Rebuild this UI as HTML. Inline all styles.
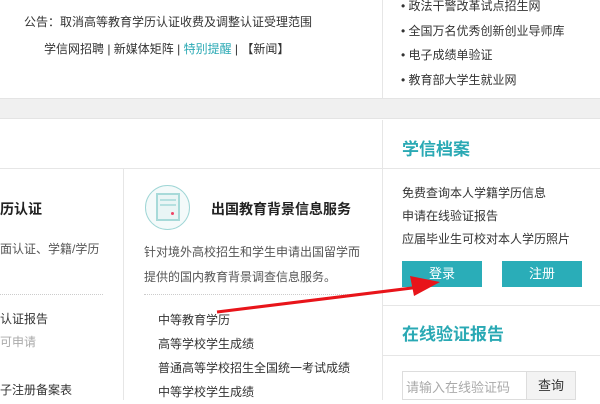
<!DOCTYPE html>
<html><head><meta charset="utf-8"><style>
*{margin:0;padding:0;box-sizing:border-box}
body{width:600px;height:400px;overflow:hidden;background:#fff;font-family:"Liberation Sans","Noto Sans CJK SC",sans-serif;color:#333;position:relative;font-size:12px}
.a{position:absolute;white-space:nowrap}
.teal{color:#2aa9b4}
.gray{background:#f0f0f0;position:absolute;left:0;top:98px;width:600px;height:21px;border-top:1px solid #e4e4e4;border-bottom:1px solid #e4e4e4}
.hl{position:absolute;height:1px;background:#e6e6e6}
.vl{position:absolute;width:1px;background:#e6e6e6}
.dot{position:absolute;border-top:1px dotted #ccc;height:0}
.btn{position:absolute;background:#2aadb8;color:#fff;text-align:center;font-size:13px;line-height:26px;height:26px;width:80px}
</style></head><body>
<div class="a" style="left:24px;top:13px;font-size:12px">公告：取消高等教育学历认证收费及调整认证受理范围</div>
<div class="a" style="left:44px;top:40px;font-size:12px">学信网招聘 | 新媒体矩阵 | <span class="teal">特别提醒</span> | 【新闻】</div>
<div class="vl" style="left:382px;top:0;height:98px"></div>
<div class="a" style="left:401px;top:-6px;line-height:24.5px;font-size:12px">• 政法干警改革试点招生网<br>• 全国万名优秀创新创业导师库<br>• 电子成绩单验证<br>• 教育部大学生就业网</div>
<div class="gray"></div>
<div class="vl" style="left:382px;top:120px;height:280px"></div>
<div class="hl" style="left:0;top:168px;width:382px"></div>
<div class="hl" style="left:382px;top:168px;width:218px"></div>
<div class="vl" style="left:123px;top:168px;height:232px"></div>
<div class="a" style="left:0;top:199px;font-size:14px;font-weight:bold;color:#222">历认证</div>
<div class="a" style="left:0;top:240px;color:#555">面认证、学籍/学历</div>
<div class="dot" style="left:0;top:294px;width:103px"></div>
<div class="a" style="left:0;top:310px">认证报告</div>
<div class="a" style="left:0;top:333px;color:#aaa">可申请</div>
<div class="a" style="left:0;top:381px">子注册备案表</div>
<div style="position:absolute;left:145px;top:185px;width:45px;height:45px;border:1px solid #9fd6d6;border-radius:50%;background:#f4fafa"></div>
<div style="position:absolute;left:156px;top:193px;width:24px;height:28px;border:2px solid #a7dad9;background:#e9f5f5"></div>
<div style="position:absolute;left:160px;top:199px;width:16px;height:2px;background:#b5e0e0"></div>
<div style="position:absolute;left:160px;top:204px;width:16px;height:2px;background:#b5e0e0"></div>
<div style="position:absolute;left:171px;top:212px;width:3px;height:3px;background:#e46;border-radius:50%"></div>
<div class="a" style="left:211px;top:199px;font-size:14px;font-weight:bold;color:#222">出国教育背景信息服务</div>
<div class="a" style="left:144px;top:240px;color:#555;line-height:25px">针对境外高校招生和学生申请出国留学而<br>提供的国内教育背景调查信息服务。</div>
<div class="dot" style="left:144px;top:294px;width:222px"></div>
<div class="a" style="left:158px;top:308px;line-height:24px">中等教育学历<br>高等学校学生成绩<br>普通高等学校招生全国统一考试成绩<br>中等学校学生成绩</div>
<div class="a teal" style="left:402px;top:135px;font-size:17px;font-weight:bold">学信档案</div>
<div class="a" style="left:402px;top:182px;line-height:23px">免费查询本人学籍学历信息<br>申请在线验证报告<br>应届毕业生可校对本人学历照片</div>
<div class="btn" style="left:402px;top:261px">登录</div>
<div class="btn" style="left:502px;top:261px">注册</div>
<div class="hl" style="left:382px;top:305px;width:218px"></div>
<div class="a teal" style="left:402px;top:320px;font-size:17px;font-weight:bold">在线验证报告</div>
<div class="hl" style="left:382px;top:355px;width:218px"></div>
<div style="position:absolute;left:402px;top:371px;width:174px;height:29px;border:1px solid #ddd"></div>
<div class="a" style="left:406px;top:377px;font-size:13px;color:#aaa">请输入在线验证码</div>
<div style="position:absolute;left:526px;top:371px;width:50px;height:29px;border:1px solid #ddd;background:#f3f3f3;text-align:center;line-height:27px;font-size:13px">查询</div>
<svg style="position:absolute;left:0;top:0" width="600" height="400">
<line x1="217" y1="312" x2="420" y2="287" stroke="#e8141a" stroke-width="3"/>
<polygon points="440,282 410,276 414,296" fill="#e8141a"/>
</svg>
</body></html>
